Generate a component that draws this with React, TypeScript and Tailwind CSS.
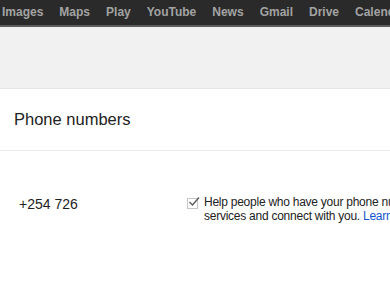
export default function App() {
  const links = ["Images", "Maps", "Play", "YouTube", "News", "Gmail", "Drive", "Calendar"];
  return (
    <div className="h-[293px] w-[390px] overflow-hidden bg-white font-['Liberation_Sans',Arial,sans-serif]">
      <div className="flex h-[27px] items-center overflow-hidden whitespace-nowrap border-b-2 border-[#5c5c5c] bg-[#2a2a2a] pb-[1px] pl-[2px] text-[12px] font-bold text-[#a3a3a3]">
        {links.map((l) => (
          <span key={l} className="mr-[16px] shrink-0">
            {l}
          </span>
        ))}
      </div>
      <div className="h-[62px] border-b border-[#e5e5e5] bg-[#f1f1f1]" />
      <div className="flex h-[62px] items-center border-b border-[#ebebeb] pl-[14px] text-[16.5px] text-[#222222]">
        Phone numbers
      </div>
      <div className="flex whitespace-nowrap pt-[44px]">
        <div className="w-[187px] shrink-0 pl-[19px] text-[14px] leading-[19px] text-[#222222]">+254 726</div>
        <div className="flex shrink-0 gap-[6px]">
          <div className="relative mt-[3px] h-[11px] w-[11px] border border-[#c6c6c6] bg-white">
            <svg width="12" height="11" viewBox="0 0 12 11" className="absolute -top-[3px] left-[0px]">
              <path d="M1.5 6 L4.5 9 L11 1.5" fill="none" stroke="#5a5a5a" strokeWidth="1.4" />
            </svg>
          </div>
          <div className="text-[12px] leading-[14px] tracking-[-0.25px] text-[#222222]">
            <div>Help people who have your phone number find you on Google</div>
            <div>
              services and connect with you. <span className="text-[#1155cc]">Learn more</span>
            </div>
          </div>
        </div>
      </div>
    </div>
  );
}
